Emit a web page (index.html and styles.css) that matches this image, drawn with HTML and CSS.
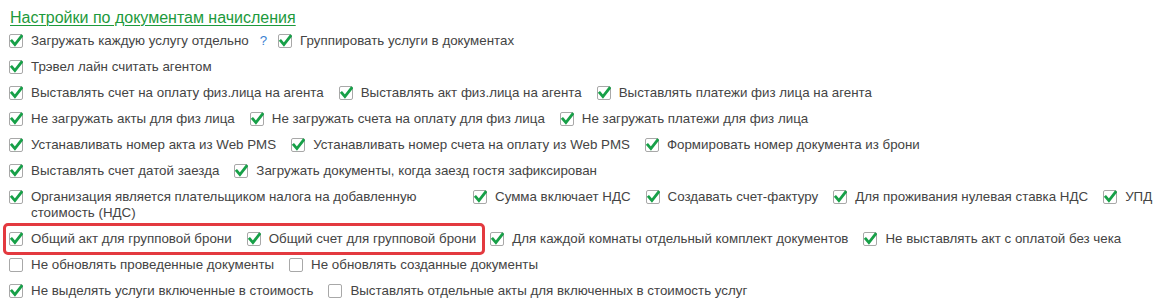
FILE: index.html
```html
<!DOCTYPE html>
<html lang="ru">
<head>
<meta charset="utf-8">
<title>Настройки по документам начисления</title>
<link rel="stylesheet" href="styles.css">
</head>
<body>
<svg width="0" height="0" class="defs">
  <defs>
    <symbol id="chk" viewBox="0 0 14 14">
      <path d="M2.8 7 L5.9 10.6 L12.4 2.2" fill="none" stroke="#17a048" stroke-width="2.8" stroke-linecap="square" stroke-linejoin="miter"/>
    </symbol>
  </defs>
</svg>
<div class="panel">
  <div class="title">Настройки по документам начисления</div>

  <div class="row">
    <label class="item"><span class="cb on"><svg><use href="#chk"/></svg></span><span class="txt">Загружать каждую услугу отдельно</span></label>
    <span class="help">?</span>
    <label class="item"><span class="cb on"><svg><use href="#chk"/></svg></span><span class="txt">Группировать услуги в документах</span></label>
  </div>

  <div class="row">
    <label class="item"><span class="cb on"><svg><use href="#chk"/></svg></span><span class="txt">Трэвел лайн считать агентом</span></label>
  </div>

  <div class="row">
    <label class="item"><span class="cb on"><svg><use href="#chk"/></svg></span><span class="txt">Выставлять счет на оплату физ.лица на агента</span></label>
    <label class="item"><span class="cb on"><svg><use href="#chk"/></svg></span><span class="txt">Выставлять акт физ.лица на агента</span></label>
    <label class="item"><span class="cb on"><svg><use href="#chk"/></svg></span><span class="txt">Выставлять платежи физ лица на агента</span></label>
  </div>

  <div class="row">
    <label class="item"><span class="cb on"><svg><use href="#chk"/></svg></span><span class="txt">Не загружать акты для физ лица</span></label>
    <label class="item"><span class="cb on"><svg><use href="#chk"/></svg></span><span class="txt">Не загружать счета на оплату для физ лица</span></label>
    <label class="item"><span class="cb on"><svg><use href="#chk"/></svg></span><span class="txt">Не загружать платежи для физ лица</span></label>
  </div>

  <div class="row">
    <label class="item"><span class="cb on"><svg><use href="#chk"/></svg></span><span class="txt">Устанавливать номер акта из Web PMS</span></label>
    <label class="item"><span class="cb on"><svg><use href="#chk"/></svg></span><span class="txt">Устанавливать номер счета на оплату из Web PMS</span></label>
    <label class="item"><span class="cb on"><svg><use href="#chk"/></svg></span><span class="txt">Формировать номер документа из брони</span></label>
  </div>

  <div class="row">
    <label class="item"><span class="cb on"><svg><use href="#chk"/></svg></span><span class="txt">Выставлять счет датой заезда</span></label>
    <label class="item"><span class="cb on"><svg><use href="#chk"/></svg></span><span class="txt">Загружать документы, когда заезд гостя зафиксирован</span></label>
  </div>

  <div class="row">
    <label class="item"><span class="cb on"><svg><use href="#chk"/></svg></span><span class="txt wide">Организация является плательщиком налога на добавленную стоимость (НДС)</span></label>
    <label class="item"><span class="cb on"><svg><use href="#chk"/></svg></span><span class="txt">Сумма включает НДС</span></label>
    <label class="item"><span class="cb on"><svg><use href="#chk"/></svg></span><span class="txt">Создавать счет-фактуру</span></label>
    <label class="item"><span class="cb on"><svg><use href="#chk"/></svg></span><span class="txt">Для проживания нулевая ставка НДС</span></label>
    <label class="item"><span class="cb on"><svg><use href="#chk"/></svg></span><span class="txt">УПД</span></label>
  </div>

  <div class="row">
    <div class="highlight">
      <label class="item"><span class="cb on"><svg><use href="#chk"/></svg></span><span class="txt">Общий акт для групповой брони</span></label>
      <label class="item"><span class="cb on"><svg><use href="#chk"/></svg></span><span class="txt">Общий счет для групповой брони</span></label>
    </div>
    <label class="item"><span class="cb on"><svg><use href="#chk"/></svg></span><span class="txt">Для каждой комнаты отдельный комплект документов</span></label>
    <label class="item"><span class="cb on"><svg><use href="#chk"/></svg></span><span class="txt">Не выставлять акт с оплатой без чека</span></label>
  </div>

  <div class="row">
    <label class="item"><span class="cb"></span><span class="txt">Не обновлять проведенные документы</span></label>
    <label class="item"><span class="cb"></span><span class="txt">Не обновлять созданные документы</span></label>
  </div>

  <div class="row">
    <label class="item"><span class="cb on"><svg><use href="#chk"/></svg></span><span class="txt">Не выделять услуги включенные в стоимость</span></label>
    <label class="item"><span class="cb"></span><span class="txt">Выставлять отдельные акты для включенных в стоимость услуг</span></label>
  </div>
</div>
</body>
</html>
```

FILE: styles.css
```css
html, body {
  margin: 0;
  padding: 0;
  background: #ffffff;
}

.defs {
  position: absolute;
  width: 0;
  height: 0;
  overflow: hidden;
}

.panel {
  padding: 8px 0 0 9px;
  font-family: "Liberation Sans", Arial, sans-serif;
  font-size: 13.33px;
  color: #444444;
}

.title {
  font-size: 16px;
  line-height: 20px;
  color: #1d9a3c;
  text-decoration: underline;
  text-underline-offset: 2px;
  text-decoration-thickness: 1px;
  margin-left: 1px;
}

.row {
  display: flex;
  align-items: flex-start;
  gap: 15px;
}

.item {
  display: flex;
  align-items: flex-start;
  padding: 5px 0;
  line-height: 16px;
  white-space: nowrap;
}

.cb {
  flex: none;
  width: 12px;
  height: 12px;
  margin-top: 1px;
  margin-right: 8px;
  border: 1px solid #a8a8a8;
  border-radius: 2px;
  background: #ffffff;
  position: relative;
}

.cb svg {
  position: absolute;
  left: -1px;
  top: -1px;
  width: 14px;
  height: 14px;
  overflow: visible;
}

.txt.wide {
  white-space: normal;
  width: 427px;
}

.help {
  color: #3a80d2;
  font-size: 13.33px;
  line-height: 16px;
  padding: 5px 0;
  margin: 0 -4px;
}

.highlight {
  display: flex;
  gap: 15px;
  border: 3px solid #e3393f;
  border-radius: 5px;
  margin: -3px -10px -3px -6px;
  padding: 0 6px 0 3px;
}
```
